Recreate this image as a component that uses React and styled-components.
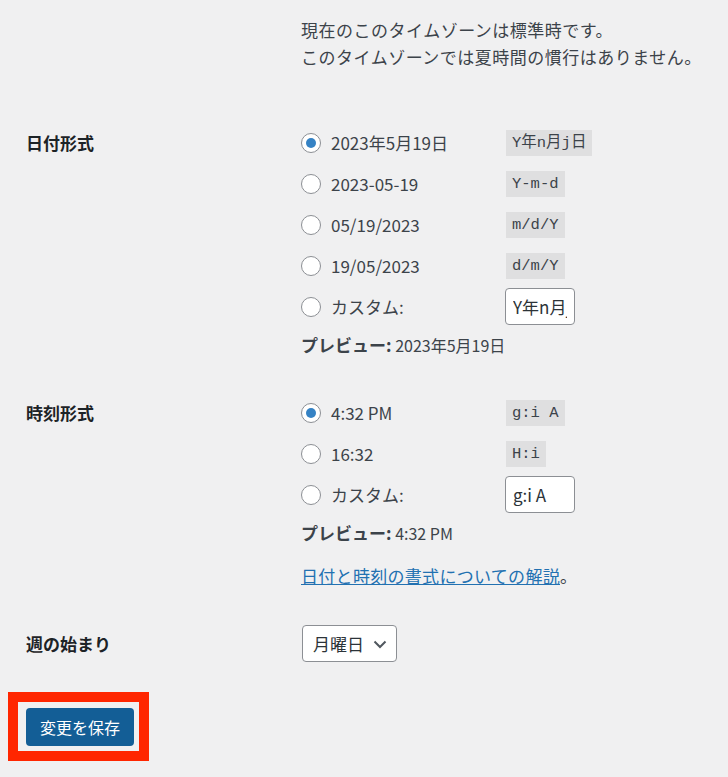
import React from "react";
import styled, { createGlobalStyle } from "styled-components";

const GlobalStyle = createGlobalStyle`
    html, body {
        margin: 0;
        padding: 0;
        background: #f0f0f1;
    }
    body {
        font-family: "Noto Sans CJK JP", "Noto Sans", sans-serif;
        font-size: 17px;
        color: #3c434a;
    }
`;

const Page = styled.div`
    width: 728px;
    height: 777px;
    padding-top: 16px;
    box-sizing: border-box;
    overflow: hidden;
`;

const FormTable = styled.div`
    display: grid;
    grid-template-columns: 275px 1fr;
    padding-left: 26px;
`;

const Label = styled.div`
    font-weight: bold;
    color: #1d2327;
    font-size: 17px;
    line-height: 41px;
    margin-top: ${(p) => p.$top || 0}px;
`;

const Field = styled.div`
    display: flex;
    flex-direction: column;
    margin-top: ${(p) => p.$top || 0}px;
`;

const Description = styled.p`
    margin: 0;
    line-height: 27px;
    font-size: 17px;
    letter-spacing: 0.5px;
`;

const OptionRow = styled.label`
    display: grid;
    grid-template-columns: 205px auto;
    align-items: center;
    height: 41px;
`;

const RadioLabel = styled.span`
    display: flex;
    align-items: center;
    gap: 10px;
    line-height: 24px;
`;

const Radio = styled.input.attrs({ type: "radio" })`
    appearance: none;
    margin: 0;
    width: 20px;
    height: 20px;
    border: 1px solid #8c8f94;
    border-radius: 50%;
    background: #fff;
    box-sizing: border-box;
    display: grid;
    place-items: center;
    &:checked::before {
        content: "";
        width: 10px;
        height: 10px;
        border-radius: 50%;
        background: #3582c4;
    }
`;

const Code = styled.code`
    display: inline-block;
    justify-self: start;
    font-family: "Liberation Mono", "Noto Sans CJK JP", monospace;
    font-size: 15.5px;
    line-height: 26px;
    height: 26px;
    padding: 0 6px;
    background: rgba(0, 0, 0, 0.07);
    color: #3c434a;
`;

const SmallInput = styled.input`
    justify-self: start;
    width: 70px;
    height: 37px;
    box-sizing: border-box;
    margin-left: -1px;
    padding: 0 7px;
    border: 1px solid #8c8f94;
    border-radius: 4px;
    background: #fff;
    font-family: "Noto Sans CJK JP", sans-serif;
    font-size: 17px;
    color: #2c3338;
    outline: none;
`;

const Preview = styled.p`
    margin: 4px 0 0;
    line-height: 27px;
    font-size: 16px;
    strong {
        font-size: 17px;
        color: #3c434a;
    }
`;

const HelpText = styled.p`
    margin: 15px 0 0;
    line-height: 27px;
    a {
        color: #2271b1;
        text-decoration: underline;
        letter-spacing: 0.3px;
    }
`;

const SelectBox = styled.div`
    display: flex;
    align-items: center;
    justify-content: space-between;
    width: 95px;
    height: 37px;
    box-sizing: border-box;
    margin-left: 1px;
    padding: 0 9px 0 10px;
    border: 1px solid #8c8f94;
    border-radius: 4px;
    background: #fff;
    color: #2c3338;
    font-size: 17px;
`;

const Highlight = styled.div`
    display: inline-block;
    margin: 28px 0 0 8px;
    border: 10px solid #ff2600;
    padding: 6px 5px 5px 8px;
`;

const SaveButton = styled.button`
    display: block;
    width: 108px;
    height: 38px;
    border: none;
    border-radius: 4px;
    background: #135e96;
    color: #fff;
    font-family: "Noto Sans CJK JP", sans-serif;
    font-size: 16px;
    padding: 0;
`;

const Chevron = () => (
    <svg width="14" height="14" viewBox="0 0 14 14">
        <path
            d="M1.5 4.5 L7 10 L12.5 4.5"
            fill="none"
            stroke="#50575e"
            strokeWidth="2"
        />
    </svg>
);

const dateFormats = [
    { text: "2023年5月19日", code: "Y年n月j日", checked: true },
    { text: "2023-05-19", code: "Y-m-d" },
    { text: "05/19/2023", code: "m/d/Y" },
    { text: "19/05/2023", code: "d/m/Y" },
];

const timeFormats = [
    { text: "4:32 PM", code: "g:i A", checked: true },
    { text: "16:32", code: "H:i" },
];

function FormatOptions({ name, options, custom, preview }) {
    return (
        <>
            {options.map((o) => (
                <OptionRow key={o.code}>
                    <RadioLabel>
                        <Radio name={name} defaultChecked={o.checked} />
                        {o.text}
                    </RadioLabel>
                    <Code>{o.code}</Code>
                </OptionRow>
            ))}
            <OptionRow>
                <RadioLabel>
                    <Radio name={name} />
                    カスタム:
                </RadioLabel>
                <SmallInput defaultValue={custom} />
            </OptionRow>
            <Preview>
                <strong>プレビュー:</strong> {preview}
            </Preview>
        </>
    );
}

export default function App() {
    return (
        <Page>
            <GlobalStyle />
            <FormTable>
                <div />
                <Field>
                    <Description>現在のこのタイムゾーンは標準時です。</Description>
                    <Description>
                        このタイムゾーンでは夏時間の慣行はありません。
                    </Description>
                </Field>

                <Label $top={52}>日付形式</Label>
                <Field $top={52}>
                    <FormatOptions
                        name="date_format"
                        options={dateFormats}
                        custom="Y年n月j日"
                        preview="2023年5月19日"
                    />
                </Field>

                <Label $top={33}>時刻形式</Label>
                <Field $top={33}>
                    <FormatOptions
                        name="time_format"
                        options={timeFormats}
                        custom="g:i A"
                        preview="4:32 PM"
                    />
                    <HelpText>
                        <a href="#">日付と時刻の書式についての解説</a>。
                    </HelpText>
                </Field>

                <Label $top={34}>週の始まり</Label>
                <Field $top={36}>
                    <SelectBox>
                        月曜日
                        <Chevron />
                    </SelectBox>
                </Field>
            </FormTable>
            <Highlight>
                <SaveButton>変更を保存</SaveButton>
            </Highlight>
        </Page>
    );
}
